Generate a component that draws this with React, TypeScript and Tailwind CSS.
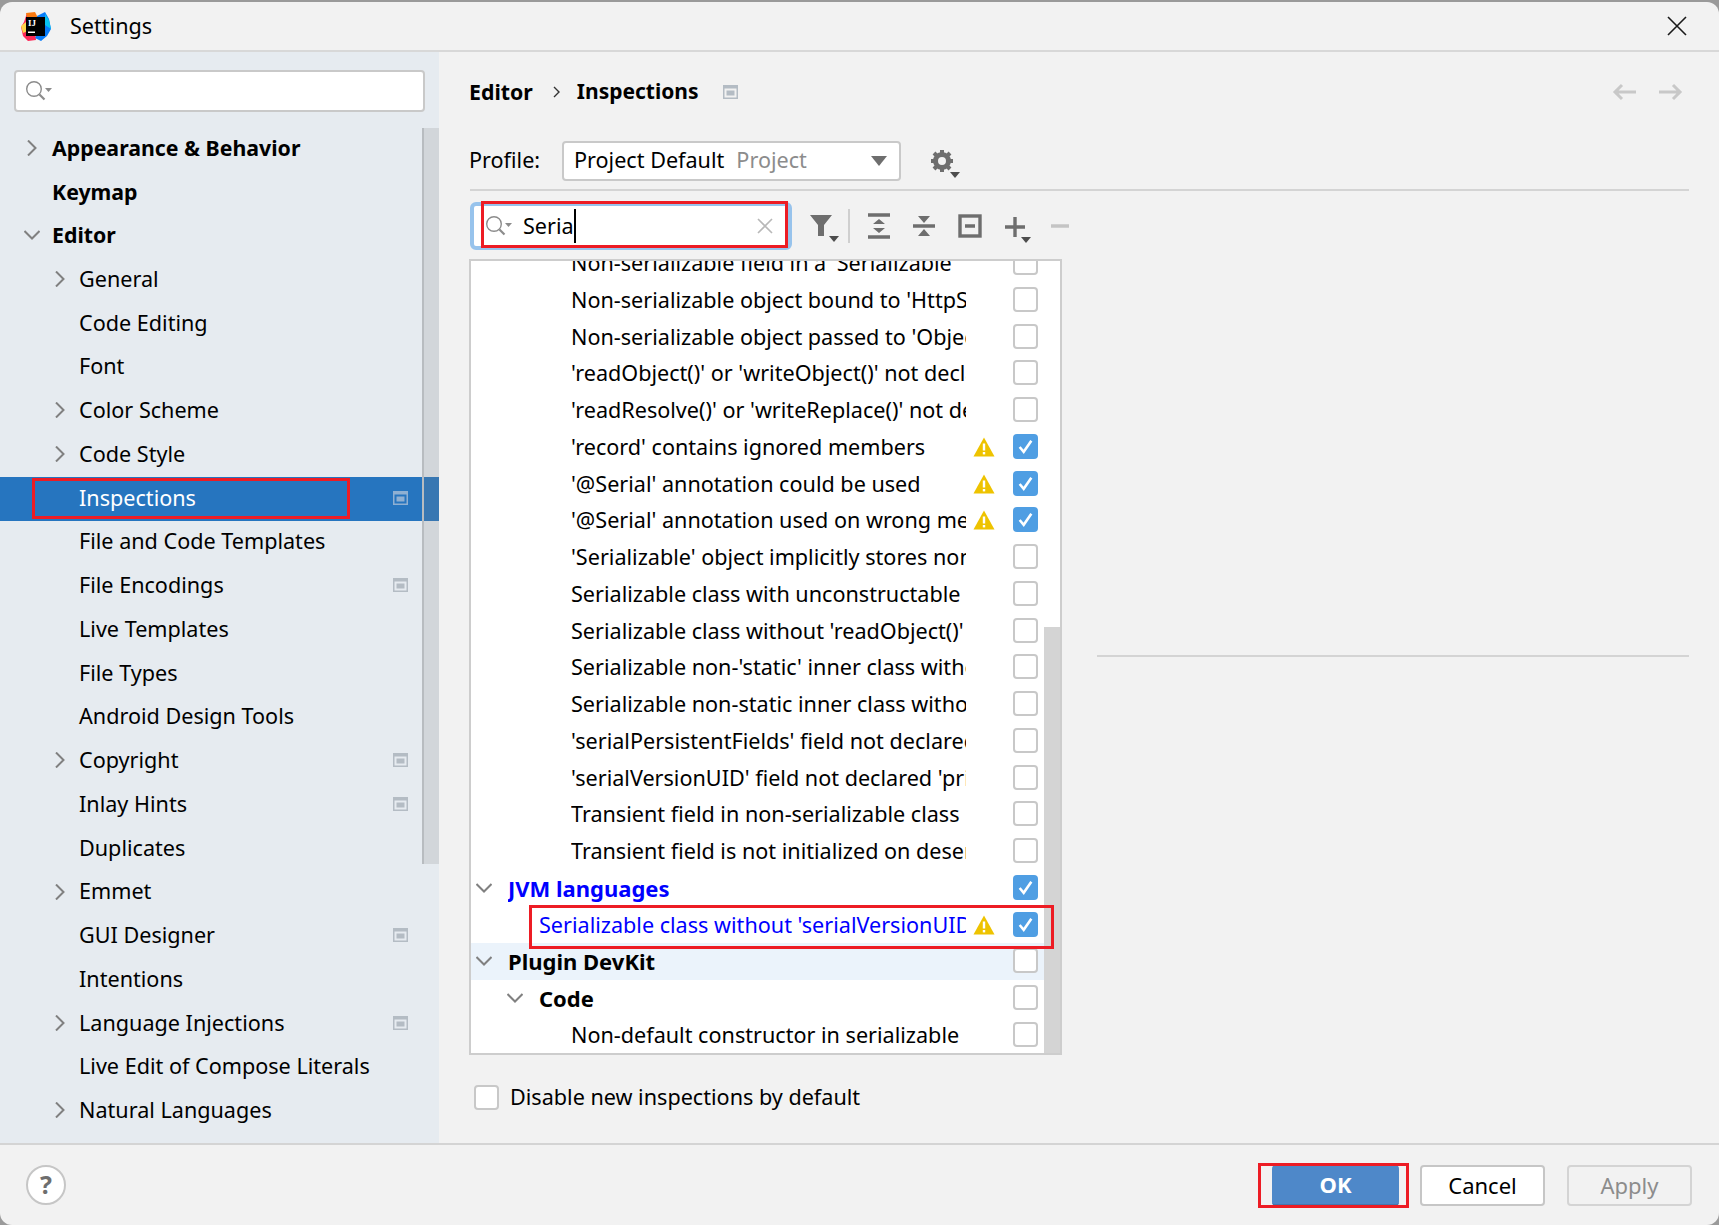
import React from "react";

const FONT = "font-['Noto_Sans',sans-serif]";

type NavRow = { label: string; level: 0 | 1; bold?: boolean; arrow?: "right" | "down"; badge?: boolean; selected?: boolean };

const NAV: NavRow[] = [
  { label: "Appearance & Behavior", level: 0, bold: true, arrow: "right" },
  { label: "Keymap", level: 0, bold: true },
  { label: "Editor", level: 0, bold: true, arrow: "down" },
  { label: "General", level: 1, arrow: "right" },
  { label: "Code Editing", level: 1 },
  { label: "Font", level: 1 },
  { label: "Color Scheme", level: 1, arrow: "right" },
  { label: "Code Style", level: 1, arrow: "right" },
  { label: "Inspections", level: 1, badge: true, selected: true },
  { label: "File and Code Templates", level: 1 },
  { label: "File Encodings", level: 1, badge: true },
  { label: "Live Templates", level: 1 },
  { label: "File Types", level: 1 },
  { label: "Android Design Tools", level: 1 },
  { label: "Copyright", level: 1, arrow: "right", badge: true },
  { label: "Inlay Hints", level: 1, badge: true },
  { label: "Duplicates", level: 1 },
  { label: "Emmet", level: 1, arrow: "right" },
  { label: "GUI Designer", level: 1, badge: true },
  { label: "Intentions", level: 1 },
  { label: "Language Injections", level: 1, arrow: "right", badge: true },
  { label: "Live Edit of Compose Literals", level: 1 },
  { label: "Natural Languages", level: 1, arrow: "right" },
];

type TreeRow = { label: string; indent: 0 | 1 | 2; checked?: boolean; warn?: boolean; bold?: boolean; blue?: boolean; arrow?: boolean; tint?: boolean };

const TREE: TreeRow[] = [
  { label: "Non-serializable field in a 'Serializable", indent: 2 },
  { label: "Non-serializable object bound to 'HttpSession'", indent: 2 },
  { label: "Non-serializable object passed to 'ObjectOutputStream'", indent: 2 },
  { label: "'readObject()' or 'writeObject()' not declared", indent: 2 },
  { label: "'readResolve()' or 'writeReplace()' not declared", indent: 2 },
  { label: "'record' contains ignored members", indent: 2, checked: true, warn: true },
  { label: "'@Serial' annotation could be used", indent: 2, checked: true, warn: true },
  { label: "'@Serial' annotation used on wrong member", indent: 2, checked: true, warn: true },
  { label: "'Serializable' object implicitly stores non-serializable", indent: 2 },
  { label: "Serializable class with unconstructable ancestor", indent: 2 },
  { label: "Serializable class without 'readObject()'", indent: 2 },
  { label: "Serializable non-'static' inner class without", indent: 2 },
  { label: "Serializable non-static inner class without", indent: 2 },
  { label: "'serialPersistentFields' field not declared", indent: 2 },
  { label: "'serialVersionUID' field not declared 'private'", indent: 2 },
  { label: "Transient field in non-serializable class", indent: 2 },
  { label: "Transient field is not initialized on deserialization", indent: 2 },
  { label: "JVM languages", indent: 0, checked: true, bold: true, blue: true, arrow: true },
  { label: "Serializable class without 'serialVersionUID'", indent: 1, checked: true, warn: true, blue: true },
  { label: "Plugin DevKit", indent: 0, bold: true, arrow: true, tint: true },
  { label: "Code", indent: 1, bold: true, arrow: true },
  { label: "Non-default constructor in serializable", indent: 2 },
];

function Chevron({ dir, className = "" }: { dir: "right" | "down"; className?: string }) {
  return (
    <svg width="16" height="16" viewBox="0 0 16 16" className={className} fill="none" stroke="#808080" strokeWidth="2">
      {dir === "right" ? <path d="M4 0.5l7.5 7.5-7.5 7.5" /> : <path d="M0.5 4l7.5 7.5 7.5-7.5" />}
    </svg>
  );
}

function SearchGlyph() {
  return (
    <svg width="30" height="24" viewBox="0 0 30 24" fill="none" className="shrink-0">
      <circle cx="10" cy="10" r="7.3" stroke="#8c8c8c" strokeWidth="1.4" />
      <path d="M15.5 15.5l5 5" stroke="#8c8c8c" strokeWidth="2.2" />
      <path d="M21 9h7l-3.5 4z" fill="#8c8c8c" />
    </svg>
  );
}

function ProjectBadge({ light = false }: { light?: boolean }) {
  const c = light ? "#8fb0d2" : "#b4bcc4";
  return (
    <svg width="15" height="14" viewBox="0 0 15 14" className="shrink-0">
      <path d="M0 0h15v14H0zM1.5 3.5v9h12v-9z" fill={c} fillRule="evenodd" />
      <rect x="3.5" y="5.5" width="8" height="5" fill={c} />
    </svg>
  );
}

function Caret({ className = "" }: { className?: string }) {
  return (
    <svg width="10" height="6" viewBox="0 0 10 6" className={className}>
      <path d="M0 0h10L5 6z" fill="#4d4d4d" />
    </svg>
  );
}

function Check({ on }: { on?: boolean }) {
  if (!on) {
    return <span className="block h-[25px] w-[25px] shrink-0 rounded-[4px] border-2 border-[#c8c8c8] bg-white" />;
  }
  return (
    <span className="flex h-[25px] w-[25px] shrink-0 items-center justify-center rounded-[4px] bg-[#4f9ee3]">
      <svg width="17" height="17" viewBox="0 0 16 16" fill="none">
        <path d="M2.5 8.5l3.8 4.5L13.5 2.5" stroke="#fff" strokeWidth="2.4" />
      </svg>
    </span>
  );
}

function Warn() {
  return (
    <svg width="22" height="20" viewBox="0 0 22 20" className="shrink-0">
      <path d="M11 0.5L21.5 19.5H0.5z" fill="#eec300" />
      <rect x="9.8" y="6.5" width="2.4" height="7" fill="#fff" />
      <rect x="9.8" y="15" width="2.4" height="2.4" fill="#fff" />
    </svg>
  );
}

function Logo() {
  return (
    <svg width="30" height="30" viewBox="0 0 30 30" className="shrink-0">
      <path d="M6 1l7 1 2 26-8 1-5-5-2-9 3-5z" fill="#fe2857" />
      <path d="M5 1l9-1 3 6-10 4z" fill="#f97a12" />
      <path d="M0 14l5-4 2 9-5 2z" fill="#fcd34a" />
      <path d="M16 4l8-4 4 7 2 10-4 7-6 5-6-3 3-5z" fill="#087cfa" />
      <path d="M24 2l4 6 2 9-6-4z" fill="#07c3f2" />
      <rect x="5" y="5" width="19" height="19" fill="#000" />
      <text x="7" y="13.5" fontSize="9" fontWeight="700" fill="#fff" fontFamily="Liberation Serif, serif">IJ</text>
      <rect x="7" y="19.5" width="7" height="1.5" fill="#fff" />
    </svg>
  );
}

function Sidebar() {
  return (
    <aside className="flex w-[439px] shrink-0 flex-col bg-[#e6ebf0]">
      <div className="pl-[14px] pt-[18px]">
        <div className="flex h-[42px] w-[411px] items-center rounded-[4px] border-2 border-[#c9c9c9] bg-white pl-[8px]">
          <SearchGlyph />
        </div>
      </div>
      <div className="relative mt-[15px] flex-1">
        {NAV.map((r) => (
          <div
            key={r.label}
            className={`relative flex h-[43.75px] items-center pb-[2px] ${r.selected ? "bg-[#2675bf] text-white" : "text-black"}`}
          >
            <span className={`flex w-[16px] shrink-0 justify-center ${r.level === 0 ? "ml-[24px] mr-[12px]" : "ml-[52px] mr-[11px]"}`}>
              {r.arrow && <Chevron dir={r.arrow} />}
            </span>
            <span className={`whitespace-nowrap ${r.bold ? "text-[21.3px] font-bold" : "text-[21.6px]"}`}>{r.label}</span>
            {r.badge && (
              <span className="absolute left-[393px]">
                <ProjectBadge light={r.selected} />
              </span>
            )}
            {r.selected && <span className="absolute left-[32px] top-[1px] h-[41px] w-[318px] border-[3px] border-[#ed1c24]" />}
          </div>
        ))}
        <div className="absolute right-0 top-[1px] h-[736px] w-[17px] border-l-2 border-[#b8bcc0] bg-[#808080]/20" />
      </div>
    </aside>
  );
}

function Toolbar() {
  return (
    <div className="ml-[17px] flex items-center text-[#6e6e6e]">
      <span className="relative block h-[30px] w-[32px]">
        <svg width="24" height="24" viewBox="0 0 24 24" className="mt-[2px]">
          <path d="M1 2h22l-8 10v11H9V12z" fill="#6e6e6e" />
        </svg>
        <Caret className="absolute bottom-[-1px] right-[2px]" />
      </span>
      <span className="ml-[7px] mr-[17px] block h-[34px] w-[2px] bg-[#cfcfcf]" />
      <svg width="24" height="26" viewBox="0 0 24 26" className="mr-[21px]">
        <path d="M1 2h22M1 24h22" stroke="#6e6e6e" strokeWidth="3.4" />
        <path d="M12 6l6 5H6zM12 20l6-5H6z" fill="#6e6e6e" />
      </svg>
      <svg width="24" height="26" viewBox="0 0 24 26" className="mr-[22px]">
        <path d="M1 13h22" stroke="#6e6e6e" strokeWidth="3.4" />
        <path d="M12 10L6 3h12zM12 16l6 7H6z" fill="#6e6e6e" />
      </svg>
      <svg width="24" height="24" viewBox="0 0 24 24" className="mr-[23px]">
        <rect x="2" y="2" width="20" height="20" fill="none" stroke="#6e6e6e" strokeWidth="3.4" />
        <path d="M7 12h10" stroke="#6e6e6e" strokeWidth="3.4" />
      </svg>
      <span className="relative mr-[26px] block h-[30px] w-[20px]">
        <svg width="20" height="20" viewBox="0 0 20 20" className="mt-[6px]">
          <path d="M0 10h20M10 0v20" stroke="#6e6e6e" strokeWidth="3.4" />
        </svg>
        <Caret className="absolute bottom-[-2px] right-[-6px]" />
      </span>
      <svg width="18" height="4" viewBox="0 0 18 4">
        <path d="M0 2h18" stroke="#c4c4c4" strokeWidth="3.4" />
      </svg>
    </div>
  );
}

function InspectionTree() {
  return (
    <div className="relative -ml-[1px] h-[796px] w-[593px] shrink-0 overflow-hidden border-2 border-[#cdcdcd] bg-white">
      <div className="absolute right-0 top-[366px] h-[428px] w-[16px] bg-[#d4d4d4]" />
      <div className="-mt-[16px]">
        {TREE.map((r) => (
          <div key={r.label} className={`relative flex h-[36.75px] items-center ${r.tint ? "mr-[16px] bg-[#ebf3fb]" : ""}`}>
            {r.arrow && (
              <span className={`absolute ${r.indent === 0 ? "left-[5px]" : "left-[36px]"} top-[10px]`}>
                <Chevron dir="down" />
              </span>
            )}
            <span
              className={`block overflow-hidden whitespace-nowrap ${r.bold ? "text-[22px] font-bold" : "text-[21.6px]"} ${r.blue ? "text-[#0000ff]" : "text-black"} ${
                r.indent === 0 ? "ml-[37px] w-[458px]" : r.indent === 1 ? "ml-[68px] w-[427px]" : "ml-[100px] w-[395px]"
              }`}
            >
              {r.label}
            </span>
            {r.warn && (
              <span className="absolute left-[502px] top-[8px]">
                <Warn />
              </span>
            )}
            <span className="absolute left-[542px] top-[5px]">
              <Check on={r.checked} />
            </span>
          </div>
        ))}
      </div>
      {/* red annotation around the highlighted row */}
      <span className="absolute left-[58px] top-[644px] h-[44px] w-[525px] border-[3px] border-[#ed1c24]" />
    </div>
  );
}

function Main() {
  return (
    <main className="flex min-w-0 flex-1 flex-col pl-[31px] pr-[30px]">
      <div className="-ml-[1px] flex h-[80px] shrink-0 items-center text-black">
        <span className="text-[21.3px] font-bold">Editor</span>
        <svg width="10" height="12" viewBox="0 0 10 12" fill="none" stroke="#333" strokeWidth="1.4" className="ml-[19px] mr-[15px]">
          <path d="M2 1l5 5-5 5" />
        </svg>
        <span className="text-[21px] font-bold">Inspections</span>
        <span className="ml-[24px]">
          <ProjectBadge />
        </span>
        <span className="ml-auto mr-[6px] flex items-center gap-[23px]">
          <svg width="24" height="18" viewBox="0 0 24 18" fill="none" stroke="#c8c8c8" strokeWidth="3">
            <path d="M24 9H3M10 2L3 9l7 7" />
          </svg>
          <svg width="24" height="18" viewBox="0 0 24 18" fill="none" stroke="#c8c8c8" strokeWidth="3">
            <path d="M0 9h21M14 2l7 7-7 7" />
          </svg>
        </span>
      </div>
      <div className="flex h-[59px] shrink-0 items-start border-b-2 border-[#d4d4d4] pt-[9px]">
        <span className="-ml-[1px] w-[93px] pt-[3px] text-[21.6px] text-black">Profile:</span>
        <div className="flex h-[40px] w-[339px] items-center rounded-[4px] border-2 border-[#c9c9c9] bg-white pb-[2px] pl-[10px] pr-[12px] text-[21.6px]">
          <span className="text-black">Project Default</span>
          <span className="ml-[12px] text-[#8c8c8c]">Project</span>
          <svg width="16" height="10" viewBox="0 0 16 10" className="ml-auto mt-[2px]">
            <path d="M0 0h16L8 10z" fill="#6e6e6e" />
          </svg>
        </div>
        <span className="relative ml-[29px] mt-[8px] block h-[24px] w-[26px]">
          <svg width="24" height="24" viewBox="0 0 24 24" fill="none">
            <circle cx="12" cy="12" r="6.5" stroke="#6e6e6e" strokeWidth="5" />
            <path d="M12 1v4M12 19v4M1 12h4M19 12h4M4 4l3 3M17 17l3 3M20 4l-3 3M7 17l-3 3" stroke="#6e6e6e" strokeWidth="4" />
          </svg>
          <Caret className="absolute bottom-[-5px] right-[-4px]" />
        </span>
      </div>
      <div className="mt-[10px] flex h-[50px] shrink-0 items-center">
        <div className="relative flex h-[48px] w-[322px] items-center rounded-[6px] border-[4px] border-[#97c3ec] bg-white pl-[10px]">
          <SearchGlyph />
          <span className="ml-[9px] border-r-2 border-black pr-0 text-[21.6px] leading-[34px] text-black">Seria</span>
          <svg width="16" height="16" viewBox="0 0 16 16" fill="none" stroke="#b8b8b8" strokeWidth="1.6" className="ml-auto mr-[15px]">
            <path d="M1 1l14 14M15 1L1 15" />
          </svg>
          <span className="absolute left-[7px] top-[-5px] h-[47px] w-[307px] border-[3px] border-[#ed1c24]" />
        </div>
        <Toolbar />
      </div>
      <div className="mt-[8px] flex">
        <InspectionTree />
        <div className="ml-[35px] mt-[396px] h-[2px] flex-1 bg-[#d4d4d4]" />
      </div>
      <label className="mt-[26px] flex items-center text-[21.6px] text-black">
        <span className="ml-[4px] mr-[11px]">
          <Check />
        </span>
        Disable new inspections by default
      </label>
    </main>
  );
}

function Footer() {
  return (
    <footer className="flex h-[82px] shrink-0 items-center border-t-2 border-[#d4d4d4] pl-[26px] pr-[27px]">
      <span className="flex h-[40px] w-[40px] items-center justify-center rounded-full border-2 border-[#c6c6c6] bg-white text-[25px] font-bold text-[#6e6e6e]">?</span>
      <div className="relative ml-auto flex items-center text-[22px]">
        <button className="h-[41px] w-[127px] rounded-[4px] border-b-2 border-[#4476ae] bg-[#4e88c9] font-bold text-white">OK</button>
        <span className="absolute left-[-14px] top-[-2px] h-[45px] w-[151px] border-[3px] border-[#ed1c24]" />
        <button className="ml-[21px] h-[41px] w-[125px] rounded-[4px] border-2 border-[#c6c6c6] bg-white text-black">Cancel</button>
        <button className="ml-[22px] h-[41px] w-[125px] rounded-[4px] border-2 border-[#d4d4d4] text-[#8c8c8c]">Apply</button>
      </div>
    </footer>
  );
}

export default function App() {
  return (
    <div className={`h-[1225px] w-[1719px] overflow-hidden bg-[#9a9a9a] pt-[2px] ${FONT}`}>
      <div className="flex h-[1223px] flex-col overflow-hidden rounded-[12px] bg-[#f2f2f2]">
        <header className="flex h-[50px] shrink-0 items-center border-b-2 border-[#d8d8d8] pl-[20px] pr-[32px]">
          <span className="ml-[1px] mt-[2px]">
            <Logo />
          </span>
          <span className="ml-[19px] pt-[1px] text-[21.6px] text-black">Settings</span>
          <svg width="20" height="20" viewBox="0 0 20 20" stroke="#1a1a1a" strokeWidth="1.6" className="ml-auto">
            <path d="M1 1l18 18M19 1L1 19" />
          </svg>
        </header>
        <div className="flex min-h-0 flex-1">
          <Sidebar />
          <Main />
        </div>
        <Footer />
      </div>
    </div>
  );
}
